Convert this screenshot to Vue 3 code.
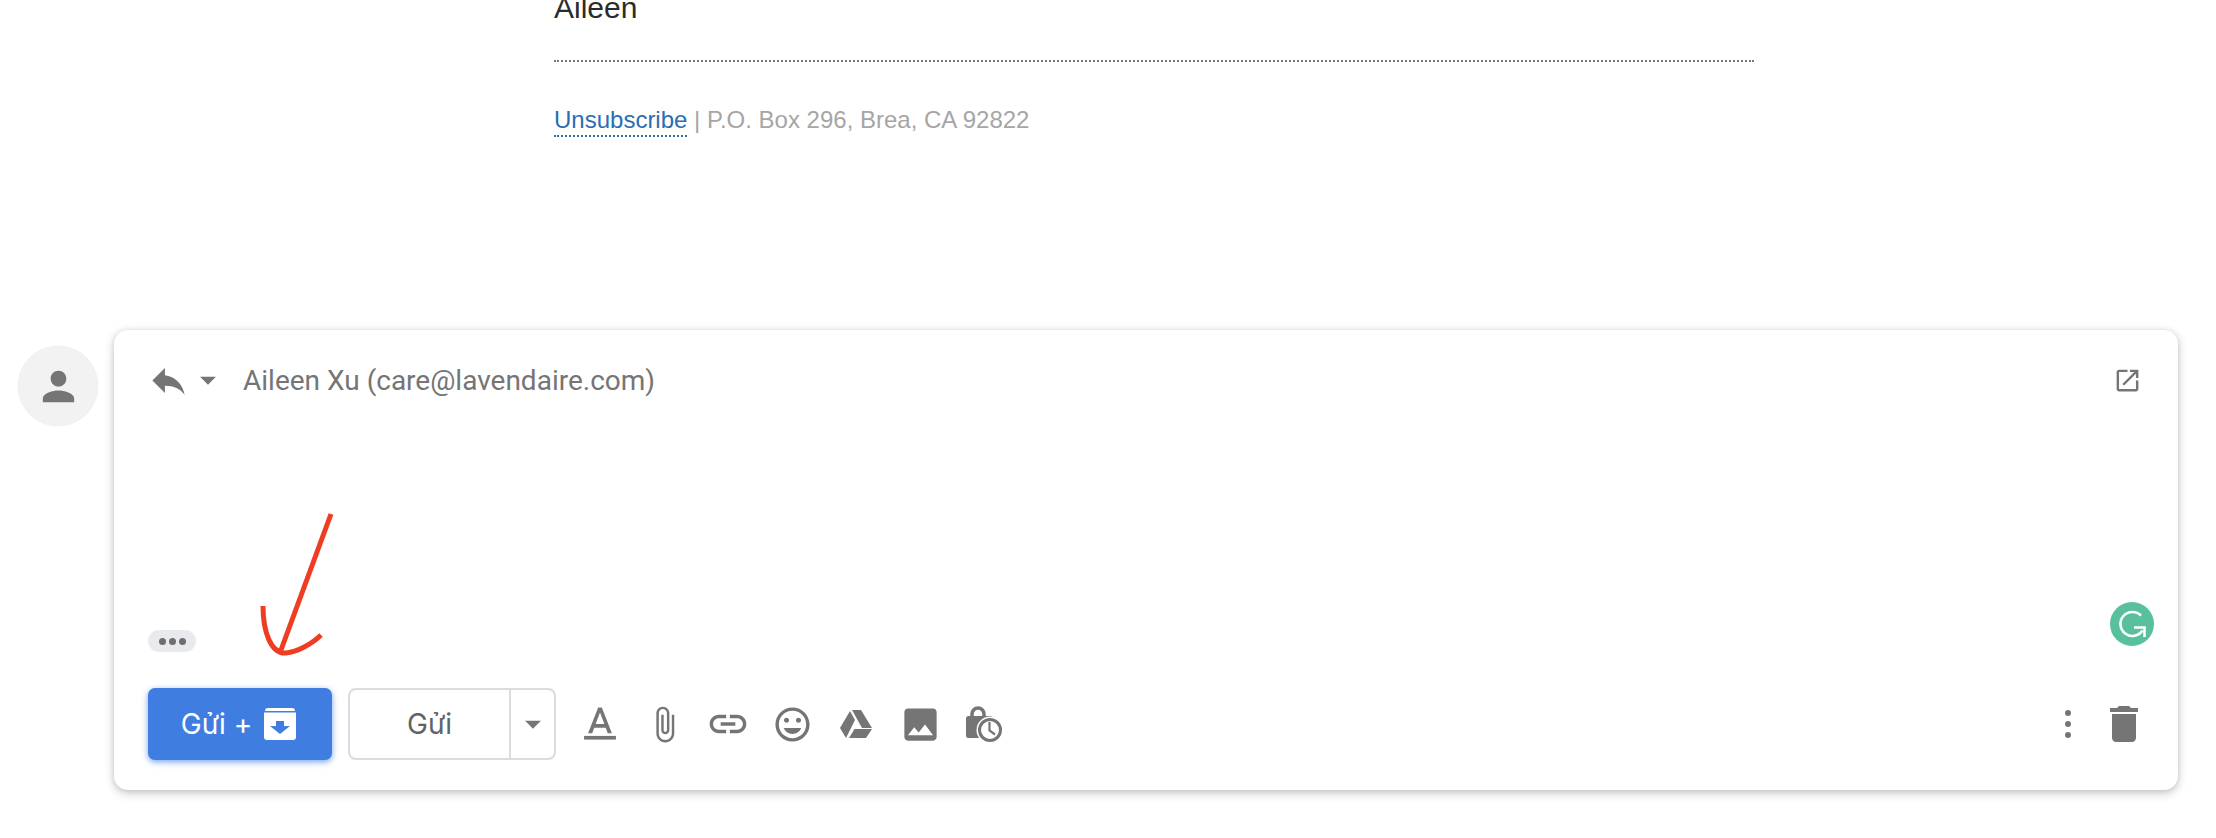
<template>
  <div class="page">
    <section class="mail">
      <p class="signoff">Aileen</p>
      <div class="rule"></div>
      <p class="foot"><a class="unsub">Unsubscribe</a> | P.O. Box 296, Brea, CA 92822</p>
    </section>

    <section class="reply">
      <div class="avatar">
        <svg width="47" height="47" viewBox="0 0 24 24"><path :d="icons.person" /></svg>
      </div>

      <div class="card">
        <header class="head">
          <svg class="reply-icon" width="43" height="43" viewBox="0 0 24 24"><path :d="icons.reply" /></svg>
          <svg class="caret" width="38" height="38" viewBox="0 0 24 24"><path :d="icons.caret" /></svg>
          <span class="to">Aileen Xu (care@lavendaire.com)</span>
          <svg class="popout" width="29" height="29" viewBox="0 0 24 24"><path :d="icons.popout" /></svg>
        </header>

        <div class="more"><i></i><i></i><i></i></div>

        <footer class="tools">
          <button class="send-archive">
            <span>Gửi +</span>
            <svg width="32" height="32" viewBox="0 0 32 32">
              <path fill="#fff" d="M4 0h24a3 3 0 0 1 3 3H1a3 3 0 0 1 3-3z" />
              <path fill="#fff" d="M0 4.500h32V29a3 3 0 0 1-3 3H3a3 3 0 0 1-3-3z" />
              <path fill="#3f7de0" d="M12 13h8v5h6l-10 8-10-8h6z" />
            </svg>
          </button>

          <div class="send-split">
            <span class="send-label">Gửi</span>
            <span class="send-more">
              <svg width="38" height="38" viewBox="0 0 24 24"><path :d="icons.caret" /></svg>
            </span>
          </div>

          <div class="icon-row">
            <span v-for="icon in toolbar" :key="icon.name" class="slot">
              <svg :width="icon.size" :height="icon.size" :viewBox="icon.box"><path v-for="d in icon.paths" :key="d" :d="d" /></svg>
            </span>
            <span class="slot">
              <svg width="36" height="36" viewBox="0 0 36 36">
                <path d="M6 12V8a6 6 0 0 1 12 0v4" fill="none" stroke="#757575" stroke-width="3.500" />
                <rect x="0" y="10" width="27" height="22" rx="2.500" />
                <circle cx="24" cy="24" r="13.500" fill="#fff" />
                <circle cx="24" cy="24" r="10.500" fill="#fff" stroke="#757575" stroke-width="3" />
                <path d="M23.500 16v8.500l5.500 4" fill="none" stroke="#757575" stroke-width="2.200" />
              </svg>
            </span>
          </div>

          <div class="tools-end">
            <span class="kebab"><i></i><i></i><i></i></span>
            <svg width="48" height="48" viewBox="0 0 24 24"><path :d="icons.trash" /></svg>
          </div>
        </footer>

        <svg class="grammarly" width="44" height="44" viewBox="0 0 44 44">
          <circle cx="22" cy="22" r="22" fill="#58c09d" />
          <path d="M31 13.500a12 12 0 1 0 1.500 15" fill="none" stroke="#fff" stroke-width="2.600" />
          <path d="M24 25.500h10.500V35" fill="none" stroke="#fff" stroke-width="2.600" />
        </svg>

        <svg class="scribble" width="80" height="150" viewBox="0 0 80 150">
          <path d="M71 2L21 138" />
          <path d="M3 94c0 26 8 48 23 47 11-1 26-9 35-18" />
        </svg>
      </div>
    </section>
  </div>
</template>

<script setup>
const icons = {
  person: 'M12 12c2.21 0 4-1.79 4-4s-1.79-4-4-4-4 1.79-4 4 1.79 4 4 4zm0 2c-2.67 0-8 1.34-8 4v2h16v-2c0-2.66-5.33-4-8-4z',
  reply: 'M10 9V5l-7 7 7 7v-4.1c5 0 8.5 1.6 11 5.1-1-5-4-10-11-11z',
  caret: 'M7 10l5 5 5-5z',
  popout: 'M19 19H5V5h7V3H5c-1.11 0-2 .9-2 2v14c0 1.1.89 2 2 2h14c1.1 0 2-.9 2-2v-7h-2v7zM14 3v2h3.59l-9.83 9.83 1.41 1.41L19 6.41V10h2V3h-7z',
  trash: 'M6 19c0 1.1.9 2 2 2h8c1.1 0 2-.9 2-2V7H6v12zM19 4h-3.5l-1-1h-5l-1 1H5v2h14V4z',
}

const toolbar = [
  {
    name: 'format',
    size: 44,
    box: '0 0 24 24',
    paths: [
      'M11 3L5.5 17h2.25l1.12-3h6.25l1.12 3h2.25L13 3h-2zm-1.38 9L12 5.67 14.38 12H9.62z',
      'M3.3 18.5h17.4v2H3.3z',
    ],
  },
  {
    name: 'attach',
    size: 39,
    box: '0 0 24 24',
    paths: [
      'M16.5 6v11.5c0 2.21-1.79 4-4 4s-4-1.79-4-4V5c0-1.38 1.12-2.5 2.5-2.5s2.5 1.12 2.5 2.5v10.5c0 .55-.45 1-1 1s-1-.45-1-1V6H10v9.5c0 1.38 1.12 2.5 2.5 2.5s2.5-1.12 2.5-2.5V5c0-2.21-1.79-4-4-4S7 2.79 7 5v12.5c0 3.04 2.46 5.5 5.5 5.5s5.5-2.46 5.5-5.5V6h-1.5z',
    ],
  },
  {
    name: 'link',
    size: 44,
    box: '0 0 24 24',
    paths: [
      'M3.9 12c0-1.71 1.39-3.1 3.1-3.1h4V7H7c-2.76 0-5 2.24-5 5s2.24 5 5 5h4v-1.9H7c-1.71 0-3.1-1.39-3.1-3.1zM8 13h8v-2H8v2zm9-6h-4v1.9h4c1.71 0 3.1 1.39 3.1 3.1s-1.39 3.1-3.1 3.1h-4V17h4c2.76 0 5-2.24 5-5s-2.24-5-5-5z',
    ],
  },
  {
    name: 'emoji',
    size: 41,
    box: '0 0 24 24',
    paths: [
      'M11.99 2C6.47 2 2 6.48 2 12s4.47 10 9.99 10C17.52 22 22 17.52 22 12S17.52 2 11.99 2zM12 20c-4.42 0-8-3.58-8-8s3.58-8 8-8 8 3.58 8 8-3.58 8-8 8zm3.5-9c.83 0 1.5-.67 1.5-1.5S16.33 8 15.5 8 14 8.67 14 9.5s.67 1.5 1.5 1.5zm-7 0c.83 0 1.5-.67 1.5-1.5S9.33 8 8.5 8 7 8.67 7 9.5 7.67 11 8.5 11zm3.5 6.5c2.33 0 4.31-1.46 5.11-3.5H6.89c.8 2.04 2.78 3.5 5.11 3.5z',
    ],
  },
  {
    name: 'drive',
    size: 32,
    box: '0 0 32 28',
    paths: ['M0 18L10 1l5 9L6 28z', 'M12 0h9l11 18H22z', 'M9 28l5.5-9H32l-6 9z'],
  },
  {
    name: 'photo',
    size: 43,
    box: '0 0 24 24',
    paths: [
      'M21 19V5c0-1.1-.9-2-2-2H5c-1.1 0-2 .9-2 2v14c0 1.1.9 2 2 2h14c1.1 0 2-.9 2-2zM8.5 13.5l2.5 3.01L14.5 12l4.5 6H5l3.5-4.5z',
    ],
  },
]
</script>

<style scoped>
.page {
  width: 2216px;
  height: 838px;
  overflow: hidden;
  background: #fff;
}

.mail {
  display: flow-root;
  width: 1200px;
  height: 346px;
  margin-left: 554px;
  font-family: "Liberation Sans", Arial, sans-serif;
}

.signoff {
  margin: -12px 0 0;
  height: 46px;
  font-size: 30px;
  line-height: 40px;
  color: #2b2b2b;
}

.rule {
  margin-top: 26px;
  border-top: 2px dotted #777;
}

.foot {
  margin: 42px 0 0;
  font-size: 24px;
  line-height: 32px;
  color: #a6a6a6;
}

.unsub {
  display: inline-block;
  color: #2a6db5;
  line-height: 30px;
  border-bottom: 2px dotted #2a6db5;
}

.reply {
  display: flex;
  align-items: flex-start;
  padding-left: 18px;
}

.reply svg {
  fill: #757575;
}

.avatar {
  display: flex;
  align-items: center;
  justify-content: center;
  width: 80px;
  height: 80px;
  margin-right: 16px;
  border-radius: 50%;
  background: #f2f2f2;
  box-shadow: 0 0 1px #ddd;
}

.card {
  position: relative;
  display: flex;
  flex-direction: column;
  width: 2064px;
  height: 460px;
  margin-top: -16px;
  padding: 28px 36px 30px 34px;
  box-sizing: border-box;
  border-radius: 14px;
  background: #fff;
  box-shadow: 0 3px 10px rgba(60, 64, 67, 0.3), 0 0 4px rgba(60, 64, 67, 0.1);
}

.head {
  display: flex;
  align-items: center;
  height: 44px;
}

.reply-icon {
  margin-left: -1px;
}

.caret {
  margin-left: -1px;
}

.to {
  margin-left: 16px;
  font-family: Roboto, "Liberation Sans", sans-serif;
  font-size: 28px;
  color: #757575;
}

.popout {
  margin-left: auto;
}

.more {
  display: flex;
  align-items: center;
  justify-content: center;
  gap: 3px;
  width: 48px;
  height: 22px;
  margin-top: auto;
  border-radius: 11px;
  background: #e8eaed;
}

.more i {
  width: 7px;
  height: 7px;
  border-radius: 50%;
  background: #6f6f6f;
}

.tools {
  display: flex;
  align-items: center;
  height: 72px;
  margin-top: 36px;
}

.send-archive {
  display: flex;
  align-items: center;
  justify-content: center;
  gap: 12px;
  width: 184px;
  height: 72px;
  padding: 0 3px 0 0;
  border: 0;
  border-radius: 7px;
  background: #3f7de0;
  box-shadow: 0 2px 6px rgba(63, 125, 224, 0.7);
  font-family: Inter, Roboto, sans-serif;
  font-size: 28px;
  color: #fff;
}

.send-split {
  display: flex;
  width: 208px;
  height: 72px;
  margin-left: 16px;
  box-sizing: border-box;
  border: 2px solid #dadce0;
  border-radius: 8px;
}

.send-label {
  display: flex;
  align-items: center;
  justify-content: center;
  width: 159px;
  border-right: 2px solid #dadce0;
  font-family: Inter, Roboto, sans-serif;
  font-size: 28px;
  color: #5f6368;
}

.send-more {
  display: flex;
  flex: 1;
  align-items: center;
  justify-content: center;
}

.icon-row {
  display: flex;
  margin-left: 12px;
}

.slot {
  display: flex;
  align-items: center;
  justify-content: center;
  width: 64px;
  height: 64px;
}

.tools-end {
  display: flex;
  align-items: center;
  gap: 22px;
  margin-left: auto;
  margin-right: -6px;
}

.kebab {
  display: flex;
  flex-direction: column;
  gap: 5px;
  margin-right: 7px;
}

.kebab i {
  width: 6px;
  height: 6px;
  border-radius: 50%;
  background: #757575;
}

.grammarly {
  position: absolute;
  right: 24px;
  top: 272px;
}

.scribble {
  position: absolute;
  left: 146px;
  top: 182px;
}

.scribble path {
  fill: none;
  stroke: #ee3d23;
  stroke-width: 5;
}
</style>

<style>
html,
body {
  margin: 0;
  background: #fff;
  overflow: hidden;
}
</style>
